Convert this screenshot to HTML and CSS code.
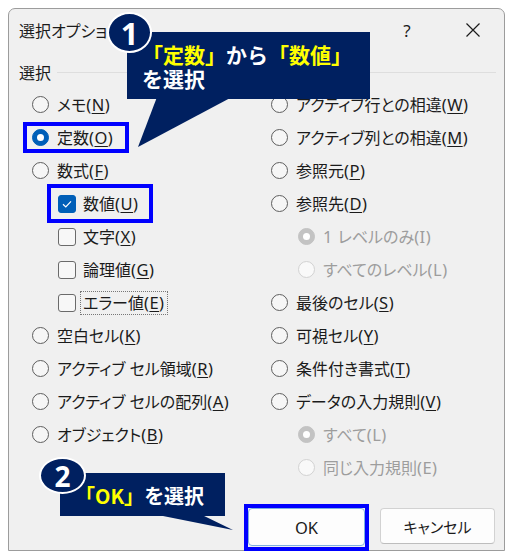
FILE: index.html
```html
<!DOCTYPE html>
<html lang="ja">
<head>
<meta charset="utf-8">
<title>選択オプション</title>
<link rel="stylesheet" href="styles.css">
</head>
<body>
<div class="stage">
  <div class="dialog">
    <div class="titlebar">
      <span class="title">選択オプション</span>
      <span class="tb-btn help">?</span>
      <span class="tb-btn close">
        <svg width="16" height="16" viewBox="0 0 16 16"><path d="M1.5 1.5 L14.5 14.5 M14.5 1.5 L1.5 14.5" stroke="#1b1b1b" stroke-width="1.2" fill="none"/></svg>
      </span>
    </div>
    <div class="section-head"><span>選択</span><div class="rule"></div></div>
    <div class="cols">
      <div class="col">
        <div class="opt"><span class="radio"></span><span>メモ<span class="k">(<u>N</u>)</span></span></div>
        <div class="opt"><span class="radio on"></span><span>定数<span class="k">(<u>O</u>)</span></span></div>
        <div class="opt"><span class="radio"></span><span>数式<span class="k">(<u>F</u>)</span></span></div>
        <div class="opt sub"><span class="check on"><svg width="18" height="18" viewBox="0 0 18 18"><path d="M5 9.3 L7.8 12 L13 6.3" stroke="#fff" stroke-width="1.2" fill="none"/></svg></span><span>数値<span class="k">(<u>U</u>)</span></span></div>
        <div class="opt sub"><span class="check"></span><span>文字<span class="k">(<u>X</u>)</span></span></div>
        <div class="opt sub"><span class="check"></span><span>論理値<span class="k">(<u>G</u>)</span></span></div>
        <div class="opt sub"><span class="check"></span><span class="focus">エラー値<span class="k">(<u>E</u>)</span></span></div>
        <div class="opt"><span class="radio"></span><span>空白セル<span class="k">(<u>K</u>)</span></span></div>
        <div class="opt"><span class="radio"></span><span>アクティブ セル領域<span class="k">(<u>R</u>)</span></span></div>
        <div class="opt"><span class="radio"></span><span>アクティブ セルの配列<span class="k">(<u>A</u>)</span></span></div>
        <div class="opt"><span class="radio"></span><span>オブジェクト<span class="k">(<u>B</u>)</span></span></div>
      </div>
      <div class="col">
        <div class="opt"><span class="radio"></span><span>アクティブ行との相違<span class="k">(<u>W</u>)</span></span></div>
        <div class="opt"><span class="radio"></span><span>アクティブ列との相違<span class="k">(<u>M</u>)</span></span></div>
        <div class="opt"><span class="radio"></span><span>参照元<span class="k">(<u>P</u>)</span></span></div>
        <div class="opt"><span class="radio"></span><span>参照先<span class="k">(<u>D</u>)</span></span></div>
        <div class="opt sub2 dis"><span class="radio on"></span><span><span class="k">1 </span>レベルのみ<span class="k">(I)</span></span></div>
        <div class="opt sub2 dis"><span class="radio"></span><span>すべてのレベル<span class="k">(L)</span></span></div>
        <div class="opt"><span class="radio"></span><span>最後のセル<span class="k">(<u>S</u>)</span></span></div>
        <div class="opt"><span class="radio"></span><span>可視セル<span class="k">(<u>Y</u>)</span></span></div>
        <div class="opt"><span class="radio"></span><span>条件付き書式<span class="k">(<u>T</u>)</span></span></div>
        <div class="opt"><span class="radio"></span><span>データの入力規則<span class="k">(<u>V</u>)</span></span></div>
        <div class="opt sub2 dis"><span class="radio on"></span><span>すべて<span class="k">(L)</span></span></div>
        <div class="opt sub2 dis"><span class="radio"></span><span>同じ入力規則<span class="k">(E)</span></span></div>
      </div>
    </div>
    <div class="buttons">
      <button class="btn ok">OK</button>
      <button class="btn cancel">キャンセル</button>
    </div>
  </div>

  <div class="mark mark-const"></div>
  <div class="mark mark-num"></div>
  <div class="mark mark-ok"></div>

  <svg class="tails" width="512" height="560" viewBox="0 0 512 560">
    <polygon points="157,97 232,97 138,147" fill="#002060"/>
    <polygon points="153,514 200,514 233,530" fill="#002060"/>
  </svg>

  <div class="callout c1">
    <div><span class="y">「定数」</span>から<span class="y">「数値」</span></div>
    <div>を選択</div>
  </div>
  <div class="badge b1">1</div>

  <div class="callout c2">
    <div><span class="y">「OK」</span>を選択</div>
  </div>
  <div class="badge b2">2</div>
</div>
</body>
</html>
```
FILE: styles.css
```css
* { box-sizing: border-box; }
html, body { margin: 0; padding: 0; background: #ffffff; }
body {
  font-family: "Noto Sans", "Noto Sans CJK JP", sans-serif;
  color: #1b1b1b;
}
.stage {
  position: relative;
  width: 512px;
  height: 560px;
  overflow: hidden;
}
.dialog {
  position: absolute;
  left: 8px;
  top: 8px;
  width: 497px;
  height: 543px;
  background: #f0f0f0;
  border: 1px solid #9c9c9c;
  border-radius: 7px 7px 0 0;
  display: flex;
  flex-direction: column;
  font-size: 16px;
  font-feature-settings: "palt";
}
.titlebar {
  height: 42px;
  display: flex;
  align-items: center;
  padding-left: 10px;
  padding-right: 8px;
}
.title { flex: 1; }
.tb-btn {
  width: 46px;
  display: flex;
  justify-content: center;
  align-items: center;
}
.help { font-size: 17px; margin-right: 20px; }
.section-head {
  margin-top: 5px;
  height: 32px;
  display: flex;
  align-items: center;
  padding-left: 10px;
  padding-right: 8px;
  gap: 6px;
}
.rule { flex: 1; height: 1px; background: #dedede; margin-top: 1px; }
.cols {
  display: grid;
  grid-template-columns: 239px 1fr;
  padding-left: 23px;
}
.col { display: flex; flex-direction: column; }
.opt {
  height: 33px;
  display: flex;
  align-items: center;
  gap: 8px;
  white-space: nowrap;
  line-height: 20px;
}
.k { font-size: 16.5px; letter-spacing: 0.5px; }
.opt u { text-decoration-thickness: 1px; text-underline-offset: 2px; }
.opt.sub { padding-left: 26px; gap: 7px; }
.opt.sub2 { padding-left: 27px; }
.opt.dis { color: #9d9d9d; }
.radio {
  width: 17px;
  height: 17px;
  border-radius: 50%;
  border: 1px solid #5e5e5e;
  background: #f6f6f6;
  flex: none;
  display: flex;
  align-items: center;
  justify-content: center;
}
.radio.on { background: #005fb8; border-color: #005fb8; }
.radio.on::after {
  content: "";
  width: 7px;
  height: 7px;
  border-radius: 50%;
  background: #ffffff;
}
.dis .radio { border-color: #d2d2d2; background: #f9f9f9; }
.dis .radio.on { background: #c3c3c3; border-color: #c3c3c3; }
.check {
  width: 18px;
  height: 18px;
  border-radius: 3px;
  border: 1px solid #6a6a6a;
  background: #f7f7f7;
  flex: none;
  display: flex;
}
.check.on { background: #005fb8; border-color: #005fb8; }
.check svg { margin: -1px; }
.focus {
  outline: 1px dotted #777777;
  outline-offset: 1px;
  padding: 0 1px;
  margin-left: -1px;
}
.buttons {
  margin-top: 24px;
  display: flex;
  justify-content: flex-end;
  align-items: flex-start;
  gap: 15px;
  padding-right: 9px;
}
.btn {
  font-family: "Noto Sans", "Noto Sans CJK JP", sans-serif;
  font-feature-settings: "palt";
  font-size: 15px;
  color: #1b1b1b;
  background: #fdfdfd;
  border-radius: 4px;
  padding: 0;
}
.btn.ok {
  width: 117px;
  height: 38px;
  border: 1px solid #7fb0e0;
  font-size: 16.5px;
}
.btn.cancel {
  width: 115px;
  height: 36px;
  border: 1px solid #d2d2d2;
  border-bottom-color: #bdbdbd;
}
.mark {
  position: absolute;
  border: 4px solid #0000ff;
}
.mark-const { left: 23px; top: 122px; width: 106px; height: 31px; }
.mark-num { left: 47px; top: 184px; width: 106px; height: 39px; }
.mark-ok { left: 244px; top: 504px; width: 125px; height: 47px; }
.tails { position: absolute; left: 0; top: 0; pointer-events: none; }
.callout {
  position: absolute;
  background: #002060;
  color: #ffffff;
  font-family: "Noto Sans CJK JP", sans-serif;
  font-weight: 700;
  white-space: nowrap;
}
.callout .y { color: #ffff00; }
.c1 {
  left: 127px;
  top: 32px;
  width: 243px;
  height: 67px;
  padding: 10px 0 0 15px;
  font-size: 21px;
  line-height: 24px;
}
.c2 {
  left: 60px;
  top: 473px;
  width: 165px;
  height: 43px;
  padding: 11px 0 0 15px;
  font-size: 20px;
  line-height: 24px;
}
.badge {
  position: absolute;
  background: #002060;
  color: #ffffff;
  border: 2px solid #ffffff;
  border-radius: 50%;
  font-family: "Noto Sans", sans-serif;
  font-weight: 700;
  display: flex;
  align-items: center;
  justify-content: center;
}
.b1 { left: 107px; top: 12px; width: 45px; height: 41px; font-size: 31px; }
.b2 { left: 39px; top: 457px; width: 47px; height: 37px; font-size: 28px; }
```
